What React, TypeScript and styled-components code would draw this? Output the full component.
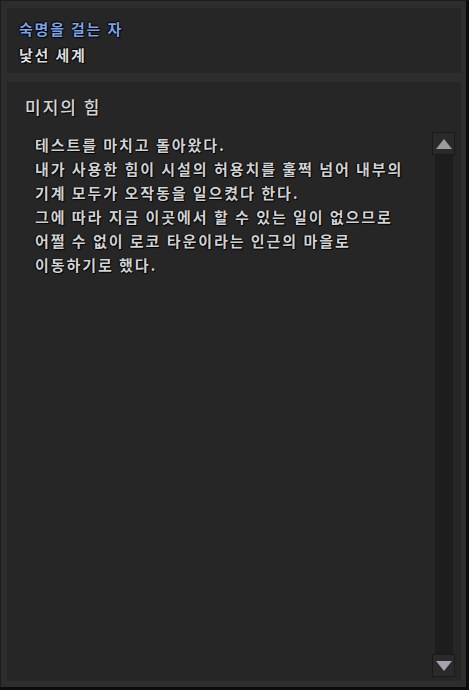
import React from "react";
import styled, { createGlobalStyle } from "styled-components";

const Global = createGlobalStyle`
  html, body { margin: 0; padding: 0; background: #0a0a0a; }
  #root { width: 469px; height: 690px; }
  * { box-sizing: border-box; }
`;

const Frame = styled.div`
  width: 469px;
  height: 690px;
  background: #2d2d2d;
  border-left: 1px solid #1c1c1c;
  border-top: 1px solid #1c1c1c;
  border-right: 3px solid #0b0b0b;
  border-bottom: 3px solid #0b0b0b;
  padding: 7px 5px 6px 6px;
  display: flex;
  flex-direction: column;
  gap: 9px;
  font-family: "Noto Sans CJK KR", "Noto Sans", sans-serif;
`;

const Panel = styled.div<{ $grow?: boolean }>`
  background: #262626;
  flex: ${(p) => (p.$grow ? "1" : "none")};
  display: flex;
  flex-direction: column;
  min-height: 0;
`;

const Header = styled(Panel)`
  height: 65px;
  padding: 8px 12px 5px;
`;

const Line = styled.div<{ $color: string }>`
  color: ${(p) => p.$color};
  font-size: 15px;
  font-weight: 700;
  letter-spacing: 1.8px;
  line-height: 26px;
  white-space: nowrap;
  text-shadow: 1px 1px 1px #000, -1px 0 1px #000, 0 -1px 1px #000;
`;

const Heading = styled.h2`
  margin: 13px 0 13px 18px;
  color: #d6d6d6;
  font-size: 17px;
  font-weight: 500;
  letter-spacing: 2px;
  line-height: 24px;
  text-shadow: 1px 1px 1px #000;
`;

const BodyRow = styled.div`
  flex: 1;
  display: flex;
  padding: 0 6px 4px 0;
  min-height: 0;
`;

const Text = styled.div`
  flex: 1;
  padding: 1px 0 0 28px;
  color: #d2d2d2;
  font-size: 15px;
  font-weight: 700;
  letter-spacing: 1.95px;
  line-height: 24px;
  white-space: nowrap;
  text-shadow: 1px 1px 1px #000, -1px 0 1px #000;
`;

const Scrollbar = styled.div`
  width: 23px;
  display: flex;
  flex-direction: column;
  align-items: center;
`;

const Track = styled.div`
  flex: 1;
  width: 18px;
  background: #1d1d1d;
`;

const ArrowButton = styled.div`
  width: 23px;
  height: 23px;
  background: #2a2a2a;
  border: 1px solid #1a1a1a;
  display: flex;
  align-items: center;
  justify-content: center;
`;

const Arrow = ({ down }: { down?: boolean }) => (
  <svg width="16" height="12" viewBox="0 0 16 12">
    <polygon
      points={down ? "0,1 16,1 8,11" : "0,11 16,11 8,1"}
      fill={down ? "#a6a3ae" : "#9c9c9c"}
    />
  </svg>
);

const lines = [
  "테스트를 마치고 돌아왔다.",
  "내가 사용한 힘이 시설의 허용치를 훌쩍 넘어 내부의",
  "기계 모두가 오작동을 일으켰다 한다.",
  "그에 따라 지금 이곳에서 할 수 있는 일이 없으므로",
  "어쩔 수 없이 로코 타운이라는 인근의 마을로",
  "이동하기로 했다.",
];

export default function App() {
  return (
    <>
      <Global />
      <Frame>
        <Header>
          <Line $color="#78a4e6">숙명을 걸는 자</Line>
          <Line $color="#dedede">낯선 세계</Line>
        </Header>
        <Panel $grow>
          <Heading>미지의 힘</Heading>
          <BodyRow>
            <Text>
              {lines.map((l) => (
                <div key={l}>{l}</div>
              ))}
            </Text>
            <Scrollbar>
              <ArrowButton>
                <Arrow />
              </ArrowButton>
              <Track />
              <ArrowButton>
                <Arrow down />
              </ArrowButton>
            </Scrollbar>
          </BodyRow>
        </Panel>
      </Frame>
    </>
  );
}
